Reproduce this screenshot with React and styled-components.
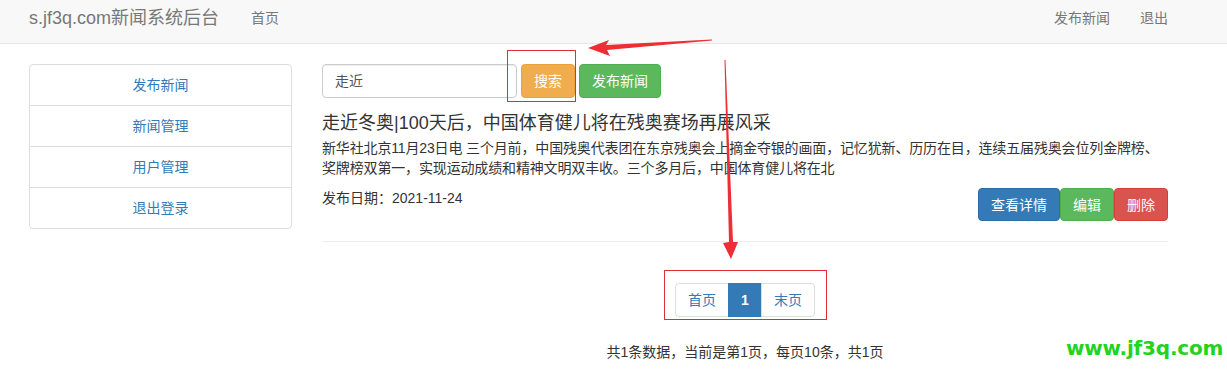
import React from 'react';
import styled, { createGlobalStyle } from 'styled-components';

const GlobalStyle = createGlobalStyle`
  html, body {
    margin: 0;
    padding: 0;
    overflow: hidden;
    background: #fff;
  }
  body {
    font-family: "Liberation Sans", "Noto Sans CJK SC", sans-serif;
    font-size: 14px;
    line-height: 20px;
    color: #333;
  }
  * {
    box-sizing: border-box;
  }
`;

const Page = styled.div`
  position: relative;
  width: 1227px;
  height: 370px;
`;

// Top navbar
const Navbar = styled.div`
  display: flex;
  align-items: center;
  height: 44px;
  padding: 0 59px 7px 29px;
  background: #f8f8f8;
  border-bottom: 1px solid #e7e7e7;
`;

const Brand = styled.span`
  font-size: 18px;
  color: #777;
  margin-right: 32px;
`;

const NavLink = styled.a`
  color: #777;
  font-size: 14px;
  text-decoration: none;
  margin-left: ${props => props.gap || '0'};
`;

const NavSpacer = styled.div`
  flex: 1;
`;

// Body columns
const Content = styled.div`
  display: flex;
  align-items: flex-start;
  gap: 30px;
  padding: 20px 0 0 29px;
`;

const ListGroup = styled.div`
  width: 263px;
  border: 1px solid #ddd;
  border-radius: 4px;
`;

const ListItem = styled.a`
  display: block;
  padding: 10px 15px;
  text-align: center;
  color: #337ab7;
  text-decoration: none;
  border-bottom: ${props => (props.last ? 'none' : '1px solid #ddd')};
`;

const Main = styled.div`
  width: 846px;
`;

const SearchRow = styled.div`
  display: flex;
  gap: 4px;
`;

const Input = styled.div`
  width: 195px;
  height: 34px;
  padding: 6px 12px;
  border: 1px solid #ccc;
  border-radius: 4px;
  color: #555;
  box-shadow: inset 0 1px 1px rgba(0, 0, 0, 0.075);
`;

const Btn = styled.button`
  height: ${props => props.h || '34px'};
  padding: 6px 12px;
  font-family: inherit;
  font-size: 14px;
  line-height: 20px;
  color: #fff;
  border: 1px solid ${props => props.border};
  border-radius: 4px;
  background: ${props => props.bg};
`;

const Title = styled.h4`
  margin: 15px 0 5px;
  font-size: 18px;
  font-weight: normal;
  line-height: 20px;
  color: #333;
`;

const Summary = styled.p`
  margin: 0;
  letter-spacing: -0.15px;
`;

const MetaRow = styled.div`
  display: flex;
  justify-content: space-between;
  align-items: flex-start;
  margin-top: 10px;
`;

const BtnGroup = styled.div`
  display: flex;
`;

const Divider = styled.hr`
  margin: 20px 0 0;
  border: 0;
  border-top: 1px solid #eee;
`;

const Pager = styled.div`
  display: flex;
  justify-content: center;
  margin-top: 41px;
`;

const PageLink = styled.a`
  display: block;
  padding: 6px 12px;
  line-height: 20px;
  text-decoration: none;
  border: 1px solid ${props => (props.active ? '#337ab7' : '#ddd')};
  margin-left: ${props => (props.first ? '0' : '-1px')};
  color: ${props => (props.active ? '#fff' : '#337ab7')};
  background: ${props => (props.active ? '#337ab7' : '#fff')};
  font-weight: ${props => (props.active ? 'bold' : 'normal')};
  border-radius: ${props =>
    props.first ? '4px 0 0 4px' : props.last ? '0 4px 4px 0' : '0'};
`;

const Footer = styled.div`
  margin-top: 25px;
  text-align: center;
`;

// Overlays: screenshot annotations and watermark
const Annotations = styled.svg`
  position: absolute;
  left: 0;
  top: 0;
  pointer-events: none;
`;

const Watermark = styled.div`
  position: absolute;
  left: 1066px;
  top: 338px;
  font-family: "DejaVu Sans", sans-serif;
  font-weight: bold;
  font-size: 20px;
  color: #22d322;
  letter-spacing: -0.2px;
`;

const menu = ['发布新闻', '新闻管理', '用户管理', '退出登录'];

const App = () => (
  <Page>
    <GlobalStyle />
    <Navbar>
      <Brand>s.jf3q.com新闻系统后台</Brand>
      <NavLink>首页</NavLink>
      <NavSpacer />
      <NavLink>发布新闻</NavLink>
      <NavLink gap="30px">退出</NavLink>
    </Navbar>
    <Content>
      <ListGroup>
        {menu.map((m, i) => (
          <ListItem key={m} last={i === menu.length - 1}>{m}</ListItem>
        ))}
      </ListGroup>
      <Main>
        <SearchRow>
          <Input>走近</Input>
          <Btn bg="#f0ad4e" border="#eea236">搜索</Btn>
          <Btn bg="#5cb85c" border="#4cae4c">发布新闻</Btn>
        </SearchRow>
        <Title>走近冬奥|100天后，中国体育健儿将在残奥赛场再展风采</Title>
        <Summary>
          新华社北京11月23日电 三个月前，中国残奥代表团在东京残奥会上摘金夺银的画面，记忆犹新、历历在目，连续五届残奥会位列金牌榜、奖牌榜双第一，实现运动成绩和精神文明双丰收。三个多月后，中国体育健儿将在北
        </Summary>
        <MetaRow>
          <span>发布日期：2021-11-24</span>
          <BtnGroup>
            <Btn h="33px" bg="#337ab7" border="#2e6da4">查看详情</Btn>
            <Btn h="33px" bg="#5cb85c" border="#4cae4c">编辑</Btn>
            <Btn h="33px" bg="#d9534f" border="#d43f3a">删除</Btn>
          </BtnGroup>
        </MetaRow>
        <Divider />
        <Pager>
          <PageLink first>首页</PageLink>
          <PageLink active>1</PageLink>
          <PageLink last>末页</PageLink>
        </Pager>
        <Footer>共1条数据，当前是第1页，每页10条，共1页</Footer>
      </Main>
    </Content>
    <Annotations width="1227" height="370" viewBox="0 0 1227 370">
      <rect x="507.5" y="50.5" width="68" height="51" fill="none" stroke="#dc2f37" strokeWidth="1" />
      <rect x="664.5" y="270.5" width="162" height="49" fill="none" stroke="#dc2f37" strokeWidth="1" />
      <polygon
        points="588,48 609,40 606,45 712,39.5 712,40.5 607,50 610,56"
        fill="#ee2d34"
      />
      <polygon
        points="724.5,60 725.5,60 733,242 738,242 731,259 723,243 729,242"
        fill="#ee2d34"
      />
    </Annotations>
    <Watermark>www.jf3q.com</Watermark>
  </Page>
);

export default App;
